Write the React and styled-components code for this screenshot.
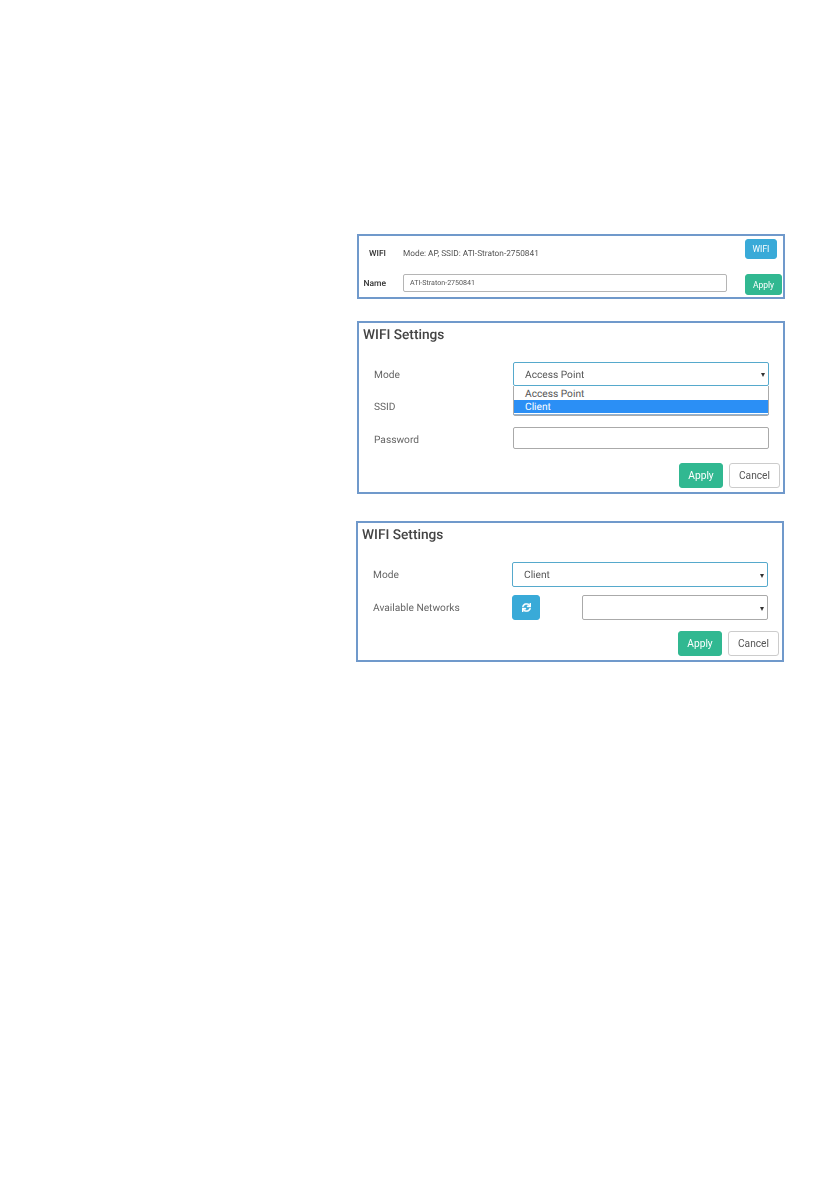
import React from 'react';
import styled, { createGlobalStyle } from 'styled-components';
import { FaSync } from 'react-icons/fa';

const GlobalStyle = createGlobalStyle`
  html, body {
    margin: 0;
    padding: 0;
    background: #fff;
    font-family: Roboto, "Liberation Sans", sans-serif;
    color: #555;
    text-rendering: geometricPrecision;
  }
`;

const Page = styled.div`
  width: 840px;
  height: 1190px;
  padding-top: 234px;
  box-sizing: border-box;
  overflow: hidden;
  filter: blur(0.35px);
`;

const Panel = styled.section`
  box-sizing: border-box;
  width: 428px;
  margin-left: ${p => p.$left || 357}px;
  margin-top: ${p => p.$top || 0}px;
  border: 2px solid #7099cb;
  background: #fff;
  padding-top: ${p => p.$paddingTop || 0}px;
`;

const StatusGrid = styled.div`
  display: grid;
  grid-template-columns: 27px 325px 38px;
  grid-template-rows: 20px 21px;
  column-gap: 17px;
  row-gap: 15px;
  padding: 3px 0 2px 0;
`;

const StatusLabel = styled.span`
  font-size: 8.5px;
  font-weight: 500;
  color: #333;
  text-align: right;
  align-self: ${p => (p.$end ? 'end' : 'start')};
  line-height: ${p => (p.$end ? '9px' : '20px')};
  white-space: nowrap;
`;

const StatusText = styled.span`
  font-size: 8.3px;
  color: #555;
  align-self: end;
  line-height: 9px;
  white-space: nowrap;
`;

const SmallInput = styled.div`
  box-sizing: border-box;
  height: 18px;
  margin-right: 1px;
  border: 1px solid #b5b5b5;
  border-radius: 2px;
  padding: 0 6px;
  font-size: 7.1px;
  line-height: 15px;
  color: #555;
`;

const Button = styled.button`
  box-sizing: border-box;
  font-family: inherit;
  width: ${p => p.$width}px;
  height: ${p => p.$height}px;
  padding: 0;
  border-radius: 3px;
  border: 1px solid ${p => p.$border};
  background: ${p => p.$bg};
  color: ${p => p.$color || '#fff'};
  font-size: ${p => p.$size || 10}px;
  display: inline-flex;
  align-items: center;
  justify-content: center;
`;

const RefreshIcon = styled(FaSync)`
  stroke: currentColor;
  stroke-width: 24px;
`;

const Title = styled.h2`
  margin: 0;
  padding-left: 4px;
  height: 20px;
  font-size: 13.7px;
  font-weight: 500;
  line-height: 22px;
  color: #444;
`;

const Form = styled.div`
  display: flex;
  flex-direction: column;
  padding: 0 14px 0 15px;
  margin-top: 18px;
`;

const FormRow = styled.div`
  display: grid;
  grid-template-columns: 139px 1fr;
  align-items: center;
  height: ${p => p.$height}px;
  margin-bottom: ${p => p.$gap}px;
  position: relative;
`;

const FieldLabel = styled.label`
  font-size: 10.2px;
  color: #666;
  padding-top: ${p => p.$drop || 2}px;
`;

const Control = styled.div`
  box-sizing: border-box;
  height: 100%;
  border: 1px solid ${p => (p.$focus ? '#56a9cc' : '#aaa')};
  border-radius: 2px;
  padding: 2px 11px 0;
  font-size: 10.2px;
  color: #555;
  display: flex;
  align-items: center;
  justify-content: space-between;
`;

const Caret = styled.i`
  width: 0;
  height: 0;
  margin-right: -8px;
  border-left: 2.5px solid transparent;
  border-right: 2.5px solid transparent;
  border-top: 4px solid #333;
`;

const Menu = styled.ul`
  position: absolute;
  top: 24px;
  left: 139px;
  right: 0;
  z-index: 2;
  margin: 0;
  padding: 0;
  list-style: none;
  background: #fff;
  border-left: 1px solid #aaa;
  border-right: 1px solid #aaa;
  border-bottom: 1px solid #8fb4d8;
  height: 29px;
  box-sizing: border-box;
`;

const MenuItem = styled.li`
  height: ${p => (p.$active ? 13 : 14)}px;
  line-height: ${p => (p.$active ? 15 : 18)}px;
  padding-left: 11px;
  font-size: 10.2px;
  color: ${p => (p.$active ? '#fff' : '#555')};
  background: ${p => (p.$active ? '#2b8ff5' : 'transparent')};
`;

const NetworkRow = styled.div`
  display: grid;
  grid-template-columns: 28px 186px;
  justify-content: space-between;
  height: 100%;
`;

const Actions = styled.div`
  display: flex;
  justify-content: flex-end;
  gap: 6px;
  padding-right: 3px;
  padding-bottom: 4px;
`;

const ApplyButton = () => (
  <Button $width={44} $height={25} $bg="#31b891" $border="#31b891" $size={10.2}>Apply</Button>
);

const CancelButton = () => (
  <Button $width={51} $height={25} $bg="#fff" $border="#ccc" $color="#555" $size={10.2}>Cancel</Button>
);

export default function App() {
  return (
    <Page>
      <GlobalStyle />
      <Panel>
        <StatusGrid>
          <StatusLabel $end>WIFI</StatusLabel>
          <StatusText>Mode: AP, SSID: ATI-Straton-2750841</StatusText>
          <Button $width={32} $height={20} $bg="#39aad8" $border="#39aad8" $size={8.5}>WIFI</Button>
          <StatusLabel>Name</StatusLabel>
          <SmallInput>ATI-Straton-2750841</SmallInput>
          <Button $width={37} $height={21} $bg="#31b891" $border="#31b891" $size={8.5}>Apply</Button>
        </StatusGrid>
      </Panel>

      <Panel $top={22} $paddingTop={1}>
        <Title>WIFI Settings</Title>
        <Form>
          <FormRow $height={24} $gap={8}>
            <FieldLabel>Mode</FieldLabel>
            <Control $focus>Access Point<Caret /></Control>
            <Menu>
              <MenuItem>Access Point</MenuItem>
              <MenuItem $active>Client</MenuItem>
            </Menu>
          </FormRow>
          <FormRow $height={22} $gap={11}>
            <FieldLabel $drop={5}>SSID</FieldLabel>
            <Control />
          </FormRow>
          <FormRow $height={22} $gap={14}>
            <FieldLabel $drop={4}>Password</FieldLabel>
            <Control />
          </FormRow>
        </Form>
        <Actions>
          <ApplyButton />
          <CancelButton />
        </Actions>
      </Panel>

      <Panel $top={27} $left={356} $paddingTop={1}>
        <Title>WIFI Settings</Title>
        <Form>
          <FormRow $height={25} $gap={8}>
            <FieldLabel>Mode</FieldLabel>
            <Control $focus>Client<Caret /></Control>
          </FormRow>
          <FormRow $height={25} $gap={11}>
            <FieldLabel>Available Networks</FieldLabel>
            <NetworkRow>
              <Button $width={28} $height={25} $bg="#39aad8" $border="#39aad8" $size={9}><RefreshIcon /></Button>
              <Control><span /><Caret /></Control>
            </NetworkRow>
          </FormRow>
        </Form>
        <Actions>
          <ApplyButton />
          <CancelButton />
        </Actions>
      </Panel>
    </Page>
  );
}
